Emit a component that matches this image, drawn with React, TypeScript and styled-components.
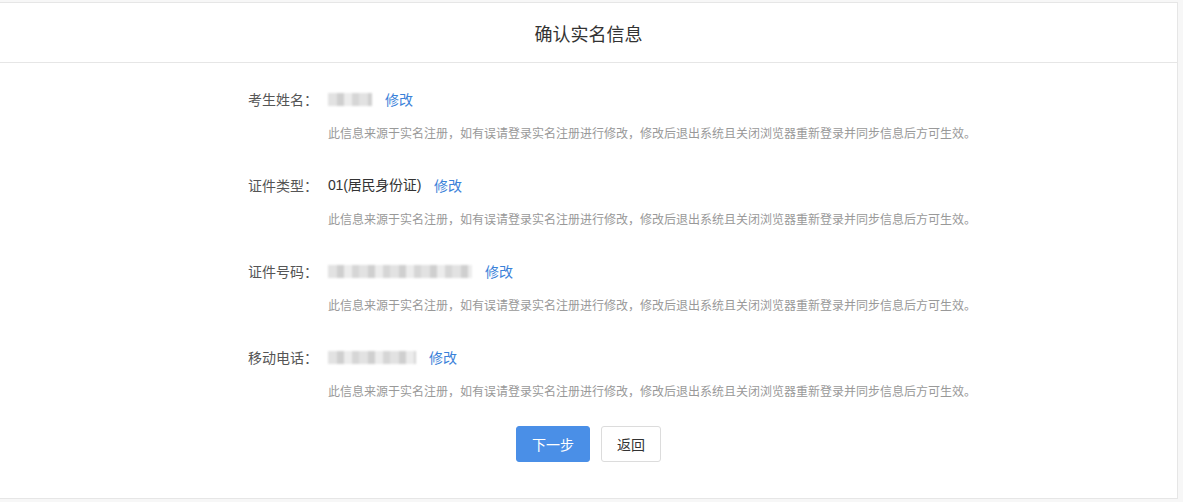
import React from 'react'
import styled, { createGlobalStyle } from 'styled-components'

const GlobalStyle = createGlobalStyle`
  html, body {
    margin: 0;
    padding: 0;
    background: #f7f7f7;
    font-family: "Noto Sans CJK SC", "Liberation Sans", sans-serif;
    color: #333;
  }
`

const colors = {
  text: '#333',
  label: '#555',
  muted: '#999',
  link: '#3b82d9',
  primary: '#4a8fe7',
  border: '#e6e6e6',
}

const Card = styled.div`
  margin-top: 2px;
  width: 1178px;
  height: 497px;
  background: #fff;
  border: 1px solid ${colors.border};
  border-left: none;
  box-sizing: border-box;
  display: flex;
  flex-direction: column;
`
const Header = styled.div`
  height: 59px;
  border-bottom: 1px solid ${colors.border};
  display: flex;
  align-items: center;
  justify-content: center;
  font-size: 18px;
  color: ${colors.text};
`
const Body = styled.div`
  padding: 26px 0 0 246px;
  display: flex;
  flex-direction: column;
  gap: 33px;
`
const Field = styled.div`
  display: grid;
  grid-template-columns: 72px 1fr;
  column-gap: 10px;
  row-gap: 15px;
`
const Label = styled.div`
  font-size: 14px;
  line-height: 20px;
  color: ${colors.label};
  text-align: right;
`
const Value = styled.div`
  display: flex;
  align-items: center;
  gap: 13px;
  font-size: 14px;
  line-height: 20px;
  color: ${colors.text};
`
const ValueText = styled.span`
  font-family: "Liberation Sans", "Noto Sans CJK SC", sans-serif;
  letter-spacing: -0.2px;
`
const Mask = styled.span<{ $w: number }>`
  display: inline-block;
  width: ${(p) => p.$w}px;
  height: 13px;
  background: repeating-linear-gradient(
    90deg,
    #e2e2e2 0 9px,
    #cfcfcf 9px 16px,
    #ececec 16px 24px,
    #d6d6d6 24px 31px
  );
  filter: blur(0.8px);
`
const Link = styled.a`
  color: ${colors.link};
  font-size: 14px;
  cursor: pointer;
`
const Hint = styled.div`
  grid-column: 2;
  font-size: 12px;
  line-height: 18px;
  color: ${colors.muted};
`
const Actions = styled.div`
  display: flex;
  justify-content: center;
  gap: 11px;
  margin-top: 26px;
`
const Button = styled.button<{ $primary?: boolean }>`
  height: 36px;
  padding: 0;
  width: ${(p) => (p.$primary ? '74px' : '60px')};
  border-radius: 3px;
  font-family: "Noto Sans CJK SC", sans-serif;
  font-size: 14px;
  cursor: pointer;
  border: 1px solid ${(p) => (p.$primary ? colors.primary : '#dcdcdc')};
  background: ${(p) => (p.$primary ? colors.primary : '#fff')};
  color: ${(p) => (p.$primary ? '#fff' : colors.text)};
`

const HINT =
  '此信息来源于实名注册，如有误请登录实名注册进行修改，修改后退出系统且关闭浏览器重新登录并同步信息后方可生效。'

const fields: { label: string; mask?: number; text?: string }[] = [
  { label: '考生姓名：', mask: 44 },
  { label: '证件类型：', text: '01(居民身份证)' },
  { label: '证件号码：', mask: 144 },
  { label: '移动电话：', mask: 88 },
]

export default function App(): React.ReactElement {
  return (
    <>
      <GlobalStyle />
      <Card>
        <Header>确认实名信息</Header>
        <Body>
          {fields.map((f) => (
            <Field key={f.label}>
              <Label>{f.label}</Label>
              <Value>
                {f.text ? <ValueText>{f.text}</ValueText> : <Mask $w={f.mask || 0} />}
                <Link>修改</Link>
              </Value>
              <Hint>{HINT}</Hint>
            </Field>
          ))}
        </Body>
        <Actions>
          <Button $primary>下一步</Button>
          <Button>返回</Button>
        </Actions>
      </Card>
    </>
  )
}
